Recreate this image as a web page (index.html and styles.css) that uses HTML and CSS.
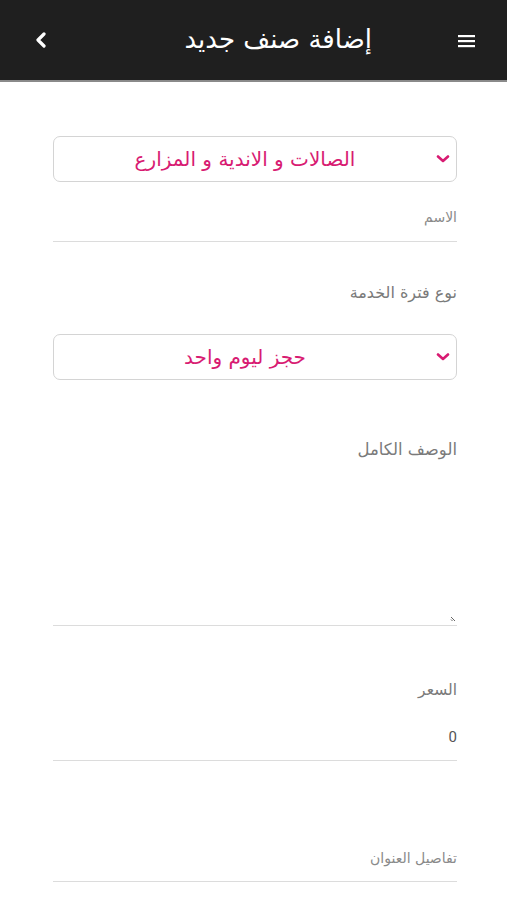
FILE: index.html
```html
<!DOCTYPE html>
<html lang="ar" dir="rtl">
<head>
<meta charset="utf-8">
<link rel="stylesheet" href="styles.css">
</head>
<body>
<header class="topbar">
  <span class="menu-icon">
    <svg width="17" height="14" viewBox="0 0 17 14"><rect x="0" y="1" width="17" height="2.2" fill="#fff"/><rect x="0" y="6" width="17" height="2.2" fill="#fff"/><rect x="0" y="11" width="17" height="2.2" fill="#fff"/></svg>
  </span>
  <h1 class="title">إضافة صنف جديد</h1>
  <span class="back-icon">
    <svg width="12" height="16" viewBox="0 0 12 16"><path d="M9 2 L3 8 L9 14" fill="none" stroke="#fff" stroke-width="3.2" stroke-linecap="round" stroke-linejoin="round"/></svg>
  </span>
</header>
<main class="form">
  <div class="select sel-1">
    <span class="select-text">الصالات و الاندية و المزارع</span>
    <svg class="chev" width="14" height="8" viewBox="0 0 14 8"><path d="M2 1.5 L7 6 L12 1.5" fill="none" stroke="#d81b72" stroke-width="2.6" stroke-linecap="round" stroke-linejoin="round"/></svg>
  </div>
  <div class="field name-field">
    <span class="ph">الاسم</span>
  </div>
  <div class="label lbl-type">نوع فترة الخدمة</div>
  <div class="select sel-2">
    <span class="select-text">حجز ليوم واحد</span>
    <svg class="chev" width="14" height="8" viewBox="0 0 14 8"><path d="M2 1.5 L7 6 L12 1.5" fill="none" stroke="#d81b72" stroke-width="2.6" stroke-linecap="round" stroke-linejoin="round"/></svg>
  </div>
  <div class="label lbl-desc">الوصف الكامل</div>
  <div class="textarea">
    <svg class="grip" width="6" height="6" viewBox="0 0 6 6"><path d="M5 1 L1 5 M5 3.5 L3.5 5" stroke="#666" stroke-width="1"/></svg>
  </div>
  <div class="label lbl-price">السعر</div>
  <div class="field price-field">
    <span class="val">0</span>
  </div>
  <div class="field addr-field">
    <span class="ph ph-addr">تفاصيل العنوان</span>
  </div>
</main>
</body>
</html>
```
FILE: styles.css
```css
* { box-sizing: border-box; }
html, body { margin: 0; padding: 0; background: #fff; }
body {
  font-family: "DejaVu Sans", "Noto Sans", sans-serif;
  width: 507px;
  height: 900px;
  overflow: hidden;
}
.topbar {
  height: 82px;
  background: #1f1f1f;
  border-bottom: 2px solid #8a8a8a;
  display: flex;
  align-items: center;
  padding: 0 32px 0 35px;
}
.menu-icon { display: flex; width: 17px; height: 14px; margin-top: 1px; }
.back-icon { display: flex; margin-right: auto; }
.title {
  margin: 0 86px 0 0;
  color: #fff;
  font-size: 26px;
  font-weight: normal;
  line-height: 1;
  margin-top: -2px;
}
.form {
  display: flex;
  flex-direction: column;
  padding: 0 50px 0 53px;
}
.select {
  height: 46px;
  border: 1px solid #d4d4d4;
  border-radius: 7px;
  display: flex;
  align-items: center;
  justify-content: center;
  position: relative;
  padding-right: 20px;
}
.select-text {
  color: #d81b72;
  font-size: 20px;
  line-height: 24px;
}
.chev { position: absolute; right: 6px; top: 18px; }
.sel-1 { margin-top: 54px; }
.field {
  border-bottom: 1px solid #dcdcdc;
  display: flex;
  align-items: flex-end;
}
.ph { color: #8a8a8a; font-size: 14px; line-height: 20px; }
.ph-addr { font-size: 14px; }
.name-field { height: 60px; padding-bottom: 14px; }
.label { color: #7a7a7a; font-size: 15px; line-height: 20px; }
.lbl-type { margin-top: 41px; font-size: 16px; }
.sel-2 { margin-top: 31px; }
.lbl-desc { margin-top: 60px; font-size: 16.5px; }
.textarea {
  height: 166px;
  border-bottom: 1px solid #dcdcdc;
  position: relative;
}
.grip { position: absolute; right: 1px; bottom: 3px; transform: scaleX(-1); }
.lbl-price { margin-top: 54px; font-size: 15.5px; }
.price-field { height: 61px; padding-bottom: 13px; }
.val { color: #555; font-size: 15px; line-height: 20px; font-family: "Roboto", sans-serif; }
.addr-field { height: 121px; padding-bottom: 13px; }
```
